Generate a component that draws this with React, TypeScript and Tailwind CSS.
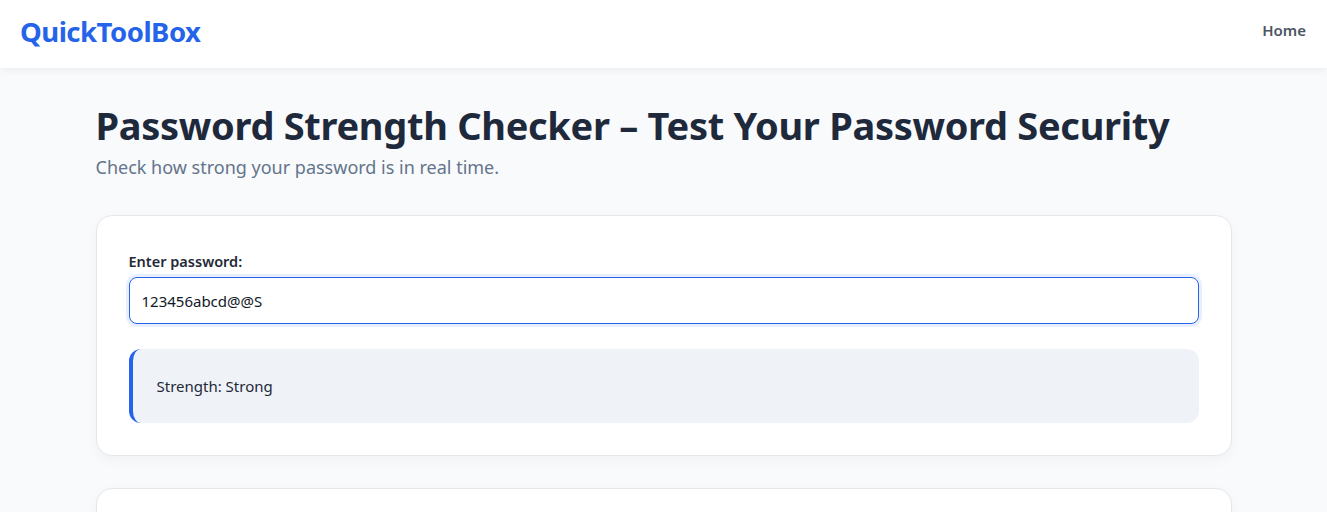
import React from 'react'

const font = { fontFamily: '"Noto Sans", "Open Sans", Roboto, sans-serif' }

export default function App() {
  return (
    <div className="min-h-screen bg-[#f8fafc] text-[#1e293b]" style={font}>
      {/* Header */}
      <header className="bg-white shadow-[0_2px_8px_rgba(0,0,0,0.06)]">
        <div className="h-[68px] flex items-center justify-between px-5 pb-[9px]">
          <a className="text-[27.5px] font-bold text-[#2563eb] tracking-[-0.5px] mt-[4px]">QuickToolBox</a>
          <nav className="pr-[1px]">
            <a className="text-[15px] font-semibold text-[#4b5563]">Home</a>
          </nav>
        </div>
      </header>

      <main className="max-w-[1200px] mx-auto px-8 pt-[35px]">
        <h1 className="text-[38px] font-bold leading-[1.2] text-[#1e293b] tracking-[-0.3px]">
          Password Strength Checker – Test Your Password Security
        </h1>
        <p className="text-[18px] text-[#64748b] mt-[5px]">Check how strong your password is in real time.</p>

        {/* Checker card */}
        <section className="mt-[34px] bg-white border border-[#e5e7eb] rounded-2xl shadow-[0_4px_14px_rgba(0,0,0,0.04)] p-8">
          <label className="block text-[14.5px] font-semibold text-[#1f2937] mt-[3px] mb-[5px]">Enter password:</label>
          <input
            type="text"
            defaultValue="123456abcd@@S"
            className="w-full h-[47px] px-3 text-[15px] text-[#111827] bg-white border border-[#2563eb] rounded-lg outline-none ring-[3px] ring-[#2563eb]/10"
            style={font}
          />
          <div className="mt-[25px] h-[74px] flex items-center bg-[#eff3f8] border-l-4 border-[#2563eb] rounded-xl pl-6">
            <span className="text-[15px] text-[#1f2937]">Strength: Strong</span>
          </div>
        </section>

        {/* Next card */}
        <section className="mt-8 h-[120px] bg-white border border-[#e5e7eb] rounded-2xl shadow-[0_4px_14px_rgba(0,0,0,0.04)]" />
      </main>
    </div>
  )
}
